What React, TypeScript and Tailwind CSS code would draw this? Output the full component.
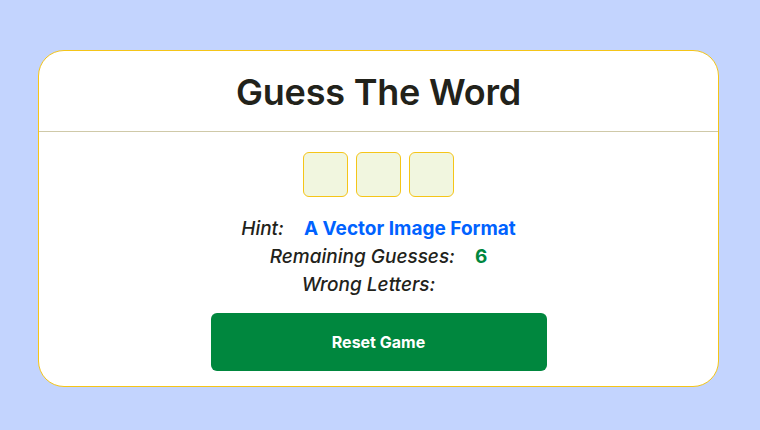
const WORD_LENGTH = 3;

export default function App() {
  return (
    <div
      className="min-h-[430px] w-full bg-[#c3d4fe] pt-[50px] pl-[38px]"
      style={{ fontFamily: "Inter, 'Noto Sans', sans-serif" }}
    >
      <div className="flex w-[681px] flex-col rounded-[26px] border border-[#f5c518] bg-white">
        <div className="flex h-[81px] items-center justify-center border-b border-[#cfc9a8]">
          <h1 className="pt-[2px] text-[36px] font-semibold leading-none tracking-[-0.2px] text-[#22221a]">
            Guess The Word
          </h1>
        </div>

        <div className="flex flex-col items-center pt-5 pb-[15px]">
          <div className="flex gap-2">
            {Array.from({ length: WORD_LENGTH }).map((_, i) => (
              <div
                key={i}
                className="h-[45px] w-[45px] rounded-md border border-[#f5c518] bg-[#f1f6df]"
              />
            ))}
          </div>

          <div className="mt-[18px] flex flex-col items-center text-[19px] leading-[28px] text-[#22221a]">
            <p className="flex gap-5">
              <span className="font-medium italic">Hint:</span>
              <span className="font-bold text-[#0062ff]">A Vector Image Format</span>
            </p>
            <p className="flex gap-5">
              <span className="font-medium italic">Remaining Guesses:</span>
              <span className="font-bold text-[#00873e]">6</span>
            </p>
            <p className="flex gap-5">
              <span className="font-medium italic">Wrong Letters:</span>
              <span className="font-bold text-[#d32f2f]"></span>
            </p>
          </div>

          <button className="mt-[14px] h-[58px] w-[336px] rounded-md bg-[#00873e] text-[16px] font-bold text-white">
            Reset Game
          </button>
        </div>
      </div>
    </div>
  );
}
